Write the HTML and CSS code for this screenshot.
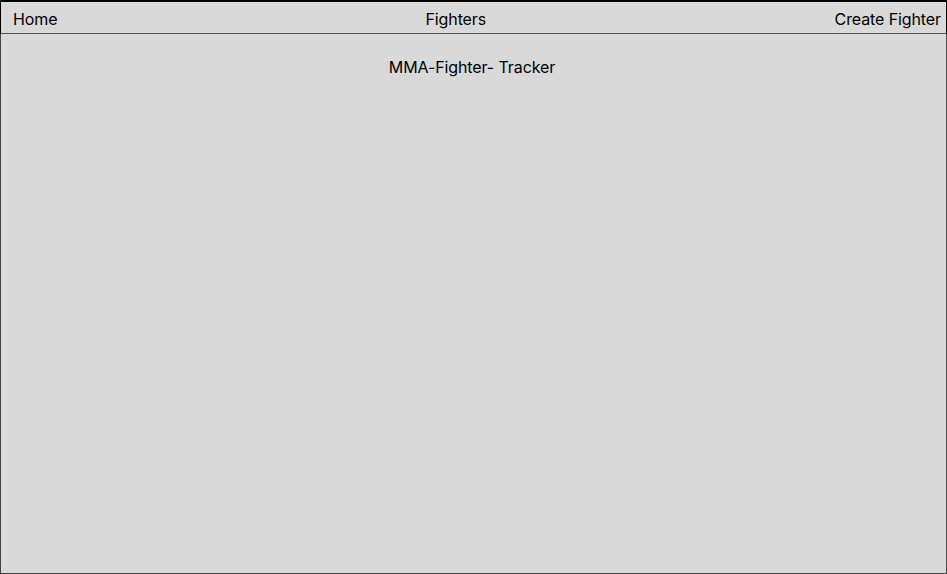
FILE: index.html
```html
<!DOCTYPE html>
<html lang="en">
<head>
<meta charset="utf-8">
<title>MMA-Fighter- Tracker</title>
<link rel="stylesheet" href="styles.css">
</head>
<body>
<div class="frame">
  <nav class="nav">
    <a class="nav-link home">Home</a>
    <a class="nav-link fighters">Fighters</a>
    <a class="nav-link create">Create Fighter</a>
  </nav>
  <h1 class="title">MMA-Fighter- Tracker</h1>
</div>
</body>
</html>
```
FILE: styles.css
```css
* { box-sizing: border-box; }
html, body { margin: 0; padding: 0; }
body {
  font-family: Inter, "Noto Sans", sans-serif;
  color: #000;
  background: #d9d9d9;
  letter-spacing: -0.1px;
}
.frame {
  width: 947px;
  height: 574px;
  background: #d9d9d9;
  border: 1px solid #444;
  border-top: none;
  display: flex;
  flex-direction: column;
  align-items: stretch;
}
.nav {
  height: 34px;
  margin: 0 0 0 -1px;
  width: 947px;
  border: 1px solid #000;
  border-top-width: 2px;
  border-bottom: 1px solid #555;
  display: flex;
  align-items: center;
  padding: 3px 5px 0 12px;
  font-size: 16px;
}
.nav-link { color: #000; text-decoration: none; line-height: 19px; }
.fighters { margin-left: 368px; }
.create { margin-left: auto; }
.title {
  margin: 24px 0 0;
  padding-right: 3px;
  font-size: 16px;
  font-weight: 400;
  line-height: 19px;
  text-align: center;
}
```
